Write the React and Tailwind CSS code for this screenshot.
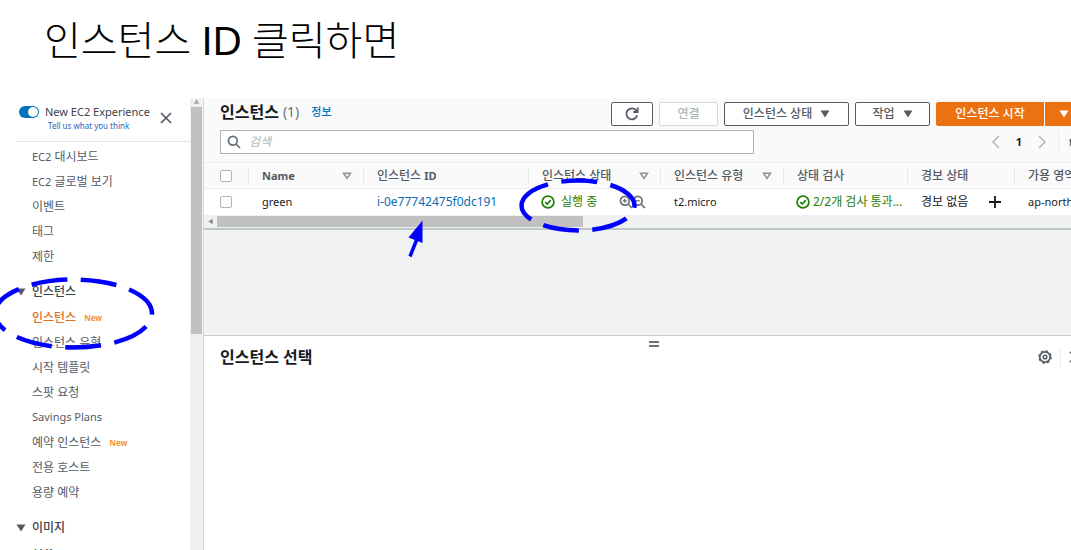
import { useState } from 'react'
import clsx from 'clsx'

const TOP_LINKS = ['EC2 대시보드', 'EC2 글로벌 보기', '이벤트', '태그', '제한']

const INSTANCE_LINKS = [
  { label: '인스턴스', isNew: true, active: true },
  { label: '인스턴스 유형' },
  { label: '시작 템플릿' },
  { label: '스팟 요청' },
  { label: 'Savings Plans', latin: true },
  { label: '예약 인스턴스', isNew: true },
  { label: '전용 호스트' },
  { label: '용량 예약' },
]

function Caret({ className = 'h-2 w-2.5' }) {
  return (
    <svg viewBox="0 0 10 8" className={clsx('shrink-0', className)} fill="currentColor" aria-hidden="true">
      <path d="M0.5 0.5h9L5 7.5z" />
    </svg>
  )
}

function SortIcon() {
  return (
    <svg viewBox="0 0 10 8" className="h-2 w-2.5 shrink-0" fill="none" stroke="#879596" strokeWidth="1.5" aria-hidden="true">
      <path d="M1.5 1.2h7L5 6.4z" />
    </svg>
  )
}

function CheckCircle() {
  return (
    <svg viewBox="0 0 14 14" className="size-3.5 shrink-0" fill="none" stroke="currentColor" strokeWidth="1.7" aria-hidden="true">
      <circle cx="7" cy="7" r="5.9" />
      <path d="M4.2 7l2 2.1 3.6-3.9" />
    </svg>
  )
}

function Magnifier({ sign, className }) {
  return (
    <svg viewBox="0 0 14 14" className={clsx('shrink-0', className)} fill="none" stroke="#687078" strokeWidth="1.7" aria-hidden="true">
      <circle cx="5.8" cy="5.8" r="4.4" />
      <path d="M9 9l4 4" />
      {sign && <path d="M3.8 5.8h4" strokeWidth="1.3" />}
      {sign === 'plus' && <path d="M5.8 3.8v4" strokeWidth="1.3" />}
    </svg>
  )
}

function Gear() {
  return (
    <svg viewBox="0 0 14 14" className="size-3.5 shrink-0" fill="none" stroke="#545b64" aria-hidden="true">
      <circle cx="7" cy="7" r="5.2" strokeWidth="1.7" />
      <circle cx="7" cy="7" r="6.2" strokeWidth="1.2" strokeDasharray="2.43 2.43" />
      <circle cx="7" cy="7" r="1.8" strokeWidth="1.5" />
    </svg>
  )
}

function Close() {
  return (
    <svg viewBox="0 0 12 12" className="size-3 shrink-0" fill="none" stroke="#545b64" strokeWidth="1.7" aria-hidden="true">
      <path d="M1 1l10 10M11 1L1 11" />
    </svg>
  )
}

function Chevron({ left }) {
  return (
    <svg viewBox="0 0 8 14" className="h-3.5 w-2" fill="none" stroke="#aab7b8" strokeWidth="1.5" aria-hidden="true">
      <path d={left ? 'M7 1L1 7l6 6' : 'M1 1l6 6-6 6'} />
    </svg>
  )
}

function NavLink({ label, isNew, active, latin }) {
  return (
    <li className="flex h-[25px] items-center gap-2 pl-8">
      <a
        href="#"
        className={clsx(latin ? 'text-[11px]' : 'text-[12px]', active ? 'font-medium text-[#e0701c]' : 'text-[#545b64]')}
      >
        {label.startsWith('EC2') ? <><span className="text-[11px]">EC2</span>{label.slice(3)}</> : label}
      </a>
      {isNew && <span className="text-[8px] font-bold text-[#f79338]">New</span>}
    </li>
  )
}

function NavHeading({ children }) {
  return (
    <h2 className="mt-2.5 flex h-[25px] items-center gap-1.5 pl-4 text-[12px] font-medium text-[#3c434b]">
      <Caret className="h-2 w-2.5 text-[#545b64]" />
      {children}
    </h2>
  )
}

function Sidebar() {
  const [enabled, setEnabled] = useState(true)
  return (
    <aside className="flex w-[204px] shrink-0 border-r border-[#d5dbdb] bg-white">
      <nav className="min-w-0 flex-1">
        <div className="ml-4 flex h-11 items-start border-b border-[#e3e6e6] pl-[3px]">
          <label className="mt-2 flex cursor-pointer">
            <input
              type="checkbox"
              role="switch"
              aria-label="New EC2 Experience"
              checked={enabled}
              onChange={e => setEnabled(e.target.checked)}
              className="peer sr-only"
            />
            <span className="flex h-3 w-5 justify-start rounded-full bg-[#879596] p-px peer-checked:justify-end peer-checked:bg-[#0073bb]">
              <span className="size-2.5 rounded-full bg-white" />
            </span>
          </label>
          <div className="ml-1.5 mt-1.5 whitespace-nowrap">
            <div className="text-[11px] leading-4 text-[#3c434b]">New EC2 Experience</div>
            <a href="#" className="block pl-[3px] text-[8px] leading-3 text-[#2a62b8]">Tell us what you think</a>
          </div>
          <button className="ml-2.5 mt-3.5" aria-label="닫기"><Close /></button>
        </div>
        <ul className="mt-0.5">
          {TOP_LINKS.map(label => <NavLink key={label} label={label} />)}
        </ul>
        <NavHeading>인스턴스</NavHeading>
        <ul className="mt-px">
          {INSTANCE_LINKS.map(link => <NavLink key={link.label} {...link} />)}
        </ul>
        <NavHeading>이미지</NavHeading>
        <ul className="mt-px">
          <NavLink label="AMI" latin isNew />
        </ul>
      </nav>
      <div className="flex w-[13px] shrink-0 flex-col items-center bg-[#f0f0f0]">
        <Caret className="my-px h-[5px] w-[7px] rotate-180 text-[#a3a3a3]" />
        <div className="mt-0.5 h-[227px] w-[11px] bg-[#c1c1c1]" />
      </div>
    </aside>
  )
}

const BTN = 'flex h-6 items-center justify-center rounded-xs border text-[12px] font-medium'

function Toolbar() {
  return (
    <div className="bg-[#fafafa] px-4">
      <div className="flex items-start gap-1.5 pr-1 pt-1">
        <h1 className="flex items-center text-[16px] font-bold leading-5 text-[#16191f]">
          인스턴스
          <span className="ml-1 text-[14px] font-normal text-[#687078]">(1)</span>
          <a href="#" className="ml-3 text-[11px] font-medium text-[#0073bb]">정보</a>
        </h1>
        <div className="flex-1" />
        <button className={clsx(BTN, 'w-[42px] border-[#545b64] bg-white')} aria-label="새로 고침">
          <svg viewBox="0 0 14 14" className="size-3.5" fill="none" stroke="#545b64" strokeWidth="1.8" aria-hidden="true">
            <path d="M12.2 8.3A5.5 5.5 0 1 1 11.2 3.4l1.3 1.4M12.7 0.6v4.4H8.3" />
          </svg>
        </button>
        <button disabled className={clsx(BTN, 'w-[59px] border-[#d5dbdb] bg-white text-[#aab7b8]')}>연결</button>
        <button className={clsx(BTN, 'w-[125px] gap-2 border-[#545b64] bg-white text-[#545b64]')}>
          인스턴스 상태 <Caret />
        </button>
        <button className={clsx(BTN, 'w-[75px] gap-2 border-[#545b64] bg-white text-[#545b64]')}>
          작업 <Caret />
        </button>
        <div className="flex gap-px">
          <button className={clsx(BTN, 'w-[108px] rounded-r-none border-[#ec7211] bg-[#ec7211] font-bold text-white')}>
            인스턴스 시작
          </button>
          <button className={clsx(BTN, 'w-[38px] rounded-l-none border-[#ec7211] bg-[#ec7211] text-white')} aria-label="시작 옵션">
            <Caret />
          </button>
        </div>
      </div>
      <div className="flex items-center pb-2 pt-1">
        <label className="flex h-6 w-[534px] items-center gap-2 border border-[#aab7b8] bg-white px-1.5">
          <Magnifier className="size-3.5" />
          <input
            type="text"
            aria-label="검색"
            placeholder="검색"
            className="min-w-0 flex-1 text-[12px] italic outline-none placeholder:text-[#aab7b8]"
          />
        </label>
        <div className="ml-auto flex items-center gap-4 pr-1">
          <button aria-label="이전"><Chevron left /></button>
          <span className="text-[11px] font-bold text-[#16191f]">1</span>
          <button aria-label="다음"><Chevron /></button>
          <button className="-ml-1 flex h-6 items-center border-l border-[#eaeded] pl-2.5" aria-label="기본 설정"><Gear /></button>
        </div>
      </div>
    </div>
  )
}

function Th({ children, sort }) {
  return (
    <th className="p-0 font-medium">
      <div className="flex h-3.5 items-center justify-between border-l border-[#e3e6e6] pl-[13px] pr-[11px]">
        <span>{children}</span>
        {sort && <SortIcon />}
      </div>
    </th>
  )
}

const CHECKBOX = 'block size-3 appearance-none rounded-xs border border-[#aab7b8] bg-white checked:bg-[#0073bb]'

function InstanceTable() {
  return (
    <div className="overflow-hidden border-b-2 border-[#bcc7c8]">
      <table className="w-full table-fixed border-collapse whitespace-nowrap text-left text-[12px] text-[#16191f]">
        <colgroup>
          <col className="w-[44px]" />
          <col className="w-[115px]" />
          <col className="w-[165px]" />
          <col className="w-[132px]" />
          <col className="w-[123px]" />
          <col className="w-[124px]" />
          <col className="w-[107px]" />
          <col />
        </colgroup>
        <thead>
          <tr className="h-[26px] border-y border-[#eaeded] bg-[#fafafa] text-[#545b64]">
            <th className="p-0 pl-4"><input type="checkbox" aria-label="모두 선택" className={CHECKBOX} /></th>
            <Th sort><span className="text-[11px] font-bold">Name</span></Th>
            <Th>인스턴스 <span className="text-[11px] font-bold">ID</span></Th>
            <Th sort>인스턴스 상태</Th>
            <Th sort>인스턴스 유형</Th>
            <Th>상태 검사</Th>
            <Th>경보 상태</Th>
            <Th>가용 영역</Th>
          </tr>
        </thead>
        <tbody>
          <tr className="h-[26px] bg-white">
            <td className="p-0 pl-4"><input type="checkbox" aria-label="green 선택" className={CHECKBOX} /></td>
            <td className="p-0 pl-3.5 text-[11px]">green</td>
            <td className="p-0 pl-3.5"><a href="#" className="text-[#0b6bb0]">i-0e77742475f0dc191</a></td>
            <td className="p-0 pl-[13px] pr-3.5">
              <div className="flex items-center">
                <span className="flex items-center gap-1.5 text-[#1d8102]"><CheckCircle />실행 중</span>
                <button className="ml-auto" aria-label="필터 추가"><Magnifier sign="plus" className="size-3.5" /></button>
                <button className="-ml-px" aria-label="필터 제외"><Magnifier sign="minus" className="size-3.5" /></button>
              </div>
            </td>
            <td className="p-0 pl-3.5 text-[11px]">t2.micro</td>
            <td className="p-0 pl-[13px]">
              <span className="flex items-center gap-[3px] text-[#1d8102]"><CheckCircle />2/2개 검사 통과...</span>
            </td>
            <td className="p-0 pl-3.5 pr-[13px]">
              <div className="flex items-center justify-between">
                경보 없음
                <button aria-label="경보 추가">
                  <svg viewBox="0 0 12 12" className="size-3" stroke="#16191f" strokeWidth="1.8" aria-hidden="true">
                    <path d="M6 0v12M0 6h12" />
                  </svg>
                </button>
              </div>
            </td>
            <td className="p-0 pl-3.5 text-[11px]">ap-northeast-2c</td>
          </tr>
        </tbody>
      </table>
      <div className="flex h-[13px] items-center bg-[#f0f0f0]">
        <Caret className="mx-0.5 h-[5px] w-[9px] rotate-90 text-[#8a8a8a]" />
        <div className="h-[11px] w-[366px] bg-[#c1c1c1]" />
      </div>
    </div>
  )
}

function DetailPanel() {
  return (
    <section className="flex-1 border-t border-[#c9cfcf] bg-white">
      <div className="flex justify-center pt-[5px]">
        <div className="h-1.5 w-2.5 border-y-2 border-[#687078]" />
      </div>
      <div className="flex items-center px-4">
        <h2 className="text-[16px] font-bold leading-5 text-[#16191f]">인스턴스 선택</h2>
        <button className="ml-auto" aria-label="설정"><Gear /></button>
        <button className="ml-2 mr-1.5 flex h-5 items-center border-l border-[#eaeded] pl-2" aria-label="패널 닫기"><Close /></button>
      </div>
    </section>
  )
}

// hand-drawn style callouts that sit over the console
function Callouts() {
  return (
    <svg
      width="700"
      height="400"
      viewBox="0 0 700 400"
      className="pointer-events-none absolute left-0 top-0"
      fill="none"
      stroke="#0000ff"
      strokeWidth="4.5"
      aria-hidden="true"
    >
      <path d="M-5 313.5A78.5 34 0 0 1 152 313.5A78.5 34 0 0 1 -5 313.5" strokeDasharray="36 13.5" />
      <path d="M521.5 205.5A56.5 25 0 0 1 634.5 205.5A56.5 25 0 0 1 521.5 205.5" strokeDasharray="36 13.5" />
      <path d="M410 256.5L417 239" strokeWidth="3.5" />
      <path d="M422.5 220.5L408.5 237.5L422.5 243z" fill="#0000ff" stroke="none" />
    </svg>
  )
}

export default function App() {
  return (
    <div className="relative flex h-screen flex-col overflow-hidden bg-white [font-family:'Noto_Sans','Noto_Sans_CJK_KR',sans-serif]">
      <header className="h-[98px] shrink-0 px-11 pt-2.5">
        <p className="text-[40px] font-light leading-[60px] text-black">
          인스턴스 <span className="font-normal [font-family:'Liberation_Sans',Arial,sans-serif]">ID</span> 클릭하면
        </p>
      </header>
      <div className="flex min-h-0 flex-1">
        <Sidebar />
        <main className="-mr-8 flex min-w-0 flex-1 flex-col">
          <Toolbar />
          <InstanceTable />
          <div className="h-[105px] shrink-0 bg-[#f1f3f3]" />
          <DetailPanel />
        </main>
      </div>
      <Callouts />
    </div>
  )
}
